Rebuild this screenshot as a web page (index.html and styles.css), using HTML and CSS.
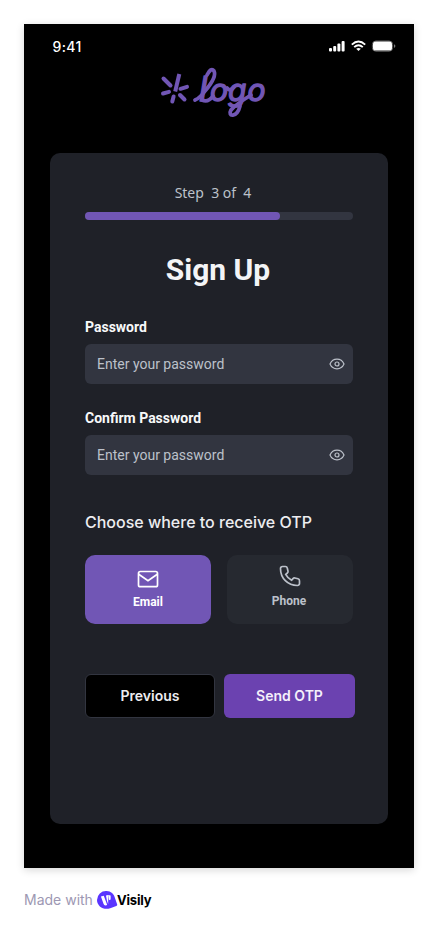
FILE: index.html
```html
<!DOCTYPE html>
<html lang="en">
<head>
<meta charset="utf-8">
<title>Sign Up</title>
<link rel="stylesheet" href="styles.css">
</head>
<body>
<main class="screen">
  <header class="status">
    <span class="time">9:41</span>
    <svg class="status-icons" width="68" height="14" viewBox="0 0 68 14">
      <g fill="#fff">
        <rect x="0" y="9" width="3" height="3.500" rx="1"/>
        <rect x="4.200" y="7" width="3" height="5.500" rx="1"/>
        <rect x="8.400" y="4.500" width="3" height="8" rx="1"/>
        <rect x="12.600" y="2" width="3" height="10.500" rx="1"/>
      </g>
      <g fill="none" stroke="#fff" stroke-width="1.900">
        <path d="M22.800 5.600Q29.500-.5 36.200 5.600"/>
        <path d="M25.200 8.100Q29.500 4.300 33.800 8.100"/>
      </g>
      <path d="M27.200 9.800Q29.500 8 31.800 9.800L29.500 12.100Z" fill="#fff"/>
      <rect x="43.400" y="2" width="20.200" height="10.200" rx="3.400" fill="none" stroke="#666"/>
      <rect x="44" y="2.600" width="19" height="9" rx="2.600" fill="#fff"/>
      <path d="M65 5.300v3.600Q66.400 8.300 66.400 7.100T65 5.300Z" fill="#777"/>
    </svg>
  </header>

  <svg class="logo" width="110" height="56" viewBox="0 0 110 56">
    <g class="spark">
      <path class="ray" d="M19.300 9L15.200 26.500"/>
      <path d="M3.500 13.500L10.500 20.500"/>
      <path d="M3 28.500L9 26.800"/>
      <path d="M12.300 36.500L13.600 31.500"/>
      <path d="M20 30L24.500 34.500"/>
      <path d="M20.500 23.800L27 21.800"/>
    </g>
    <text class="wordmark" y="36"><tspan class="tall" x="39" y="35.500">l</tspan><tspan x="50" y="36">o</tspan><tspan x="68">g</tspan><tspan x="87.500">o</tspan></text>
    <g class="swash">
      <path d="M35 35Q40 33 45 26Q57 12 54 6Q51 2 47 10"/>
      <path d="M42 35Q48 38 53 31"/>
      <path d="M67 23Q70 27 74 22"/>
      <path d="M80 41C77 53 67 52 71 45Q75 40 91 30"/>
    </g>
  </svg>

  <section class="card">
    <p class="step">Step  3 of  4</p>
    <div class="progress"><div class="progress-value"></div></div>
    <h1>Sign Up</h1>

    <div class="field">
      <span class="label">Password</span>
      <div class="input"><span>Enter your password</span>
        <svg width="16" height="16" viewBox="0 0 16 16"><path d="M1 8C2.400 4.800 4.800 3.200 8 3.200S13.600 4.800 15 8C13.600 11.200 11.200 12.800 8 12.800S2.400 11.200 1 8Z"/><circle cx="8" cy="8" r="2"/></svg>
      </div>
    </div>
    <div class="field">
      <span class="label">Confirm Password</span>
      <div class="input"><span>Enter your password</span>
        <svg width="16" height="16" viewBox="0 0 16 16"><path d="M1 8C2.400 4.800 4.800 3.200 8 3.200S13.600 4.800 15 8C13.600 11.200 11.200 12.800 8 12.800S2.400 11.200 1 8Z"/><circle cx="8" cy="8" r="2"/></svg>
      </div>
    </div>

    <h2>Choose where to receive OTP</h2>
    <div class="options">
      <div class="option selected">
        <svg width="24" height="24" viewBox="0 0 24 24"><rect x="2.500" y="4.500" width="19" height="15.200" rx="1.800"/><path d="M2.700 7.200L12 13.600L21.300 7.200"/></svg>
        <span>Email</span>
      </div>
      <div class="option">
        <svg width="24" height="24" viewBox="0 0 24 24"><path d="M21.500 16.900v2.600a2 2 0 0 1-2.200 2C9.800 21.500 2.500 14.200 2.500 4.700a2 2 0 0 1 2-2.200h2.800a2 2 0 0 1 2 1.600l.7 3.100a2 2 0 0 1-.6 1.800L7.700 10.400a13.500 13.500 0 0 0 5.900 5.900l1.400-1.700a2 2 0 0 1 1.900-.6l3.100.8a2 2 0 0 1 1.500 2.100z"/></svg>
        <span>Phone</span>
      </div>
    </div>

    <div class="actions">
      <div class="button previous">Previous</div>
      <div class="button send">Send OTP</div>
    </div>
  </section>
</main>

<footer>
  <span class="made">Made with</span>
  <svg width="21" height="20" viewBox="0 0 21 20"><path d="M9.500 1C14 1 17 4 17.800 7.500L20.200 14.500C20.400 15.200 20 15.700 19.300 15.900L13.200 18.200C7 20.500 0 16.500 0 10A9 9 0 0 1 9.500 1Z" fill="#5a35ff"/><path d="M3.900 6.600L6.800 5.800L10.200 15.100L8.400 15.400Q7 15.300 6.500 13.700Z" fill="#fff"/><path d="M9 5.600L11.200 5V14.200L10 11Z" fill="#fff"/><path d="M11.200 5L13.600 5.600V9.500L11.900 10.200Z" fill="#fff"/></svg>
  <span class="brand">Visily</span>
</footer>
</body>
</html>
```

FILE: styles.css
```css
* { box-sizing: border-box; }
body {
  margin: 0;
  padding: 24px;
  height: 932px;
  overflow: hidden;
  background: #fff;
  font-family: Inter, sans-serif;
}
h1, h2, p { margin: 0; }
svg { display: block; flex: none; }

.screen {
  display: flex;
  flex-direction: column;
  width: 390px;
  height: 844px;
  background: #000;
  box-shadow: 0 2px 8px rgba(0, 0, 0, .16);
}
.status {
  display: flex;
  justify-content: space-between;
  align-items: center;
  height: 44px;
  padding: 0 17px 0 28.500px;
}
.time { color: #fff; font-size: 14px; font-weight: 500; letter-spacing: .4px; }

.logo { margin: -3px 0 0 136px; overflow: visible; }
.spark path { fill: none; stroke: #7156b5; stroke-width: 4; stroke-linecap: round; }
.spark .ray { stroke-linecap: butt; }
.swash path { fill: none; stroke: #7156b5; stroke-width: 3.8; stroke-linecap: round; stroke-linejoin: round; }
.wordmark {
  fill: #7156b5;
  stroke: #7156b5;
  stroke-width: 1.400;
  stroke-linejoin: round;
  font: italic 400 30px Inter, sans-serif;
}
.wordmark .tall { font-size: 34px; }

.card {
  width: 338px;
  height: 671px;
  margin: 32px 0 0 26px;
  padding: 30px 35px 0;
  border-radius: 10px;
  background: #1f2128;
}
.step {
  height: 20px;
  color: #bcc1ca;
  font: 14px/20px "Noto Sans", sans-serif;
  text-align: center;
  white-space: pre;
  margin-right: 12px;
}
.progress { height: 8px; margin-top: 9px; border-radius: 4px; background: #323540; }
.progress-value { width: 195px; height: 8px; border-radius: 4px; background: #7156b5; }
h1 {
  margin: 27px 2px 0 0;
  color: #f3f4f6;
  font: 700 30px/46px Roboto, sans-serif;
  text-align: center;
}
.field { margin-top: 23px; }
.label {
  display: block;
  color: #f8f9fa;
  font: 700 14px/22px Roboto, sans-serif;
  margin-bottom: 6px;
}
.input {
  display: flex;
  justify-content: space-between;
  align-items: center;
  height: 40px;
  padding: 0 8.500px 0 12px;
  border-radius: 6px;
  background: #323540;
  color: #bcc1ca;
  font: 14px/22px Roboto, sans-serif;
}
.input svg { fill: none; stroke: #bcc1ca; stroke-width: 1.2; }
h2 { margin-top: 34px; color: #ededf0; font-size: 16px; font-weight: 500; line-height: 26px; }
.options { display: grid; grid-template-columns: 1fr 1fr; gap: 16px; margin-top: 20px; }
.option {
  display: flex;
  flex-direction: column;
  align-items: center;
  height: 69px;
  padding-top: 9px;
  border-radius: 10px;
  background: #262930;
  color: #bcc1ca;
  font: 700 12px/20px Roboto, sans-serif;
}
.option svg { fill: none; stroke: currentColor; stroke-width: 1.7; }
.option span { margin: 3px 2px 0 0; }
.option.selected { padding-top: 12px; background: #7156b5; color: #fff; }
.option.selected span { margin: 1px 0 0; }
.actions { display: flex; gap: 9px; width: 270px; margin-top: 50px; }
.button {
  display: flex;
  justify-content: center;
  align-items: center;
  height: 44px;
  padding-bottom: 1px;
  border-radius: 6px;
  font-size: 14px;
  font-weight: 600;
}
.previous { width: 130px; border: 1px solid #323540; background: #000; color: #ededf0; }
.send { width: 131px; background: #6b42b0; color: #f4f0fa; }

footer { display: flex; align-items: center; height: 20px; margin-top: 22px; }
.made { width: 73px; margin-top: -1px; color: #9d98b3; font-size: 14px; font-weight: 400; white-space: nowrap; }
.brand { color: #000; font-size: 13px; font-weight: 700; letter-spacing: -.2px; margin-left: -1px; }
```
